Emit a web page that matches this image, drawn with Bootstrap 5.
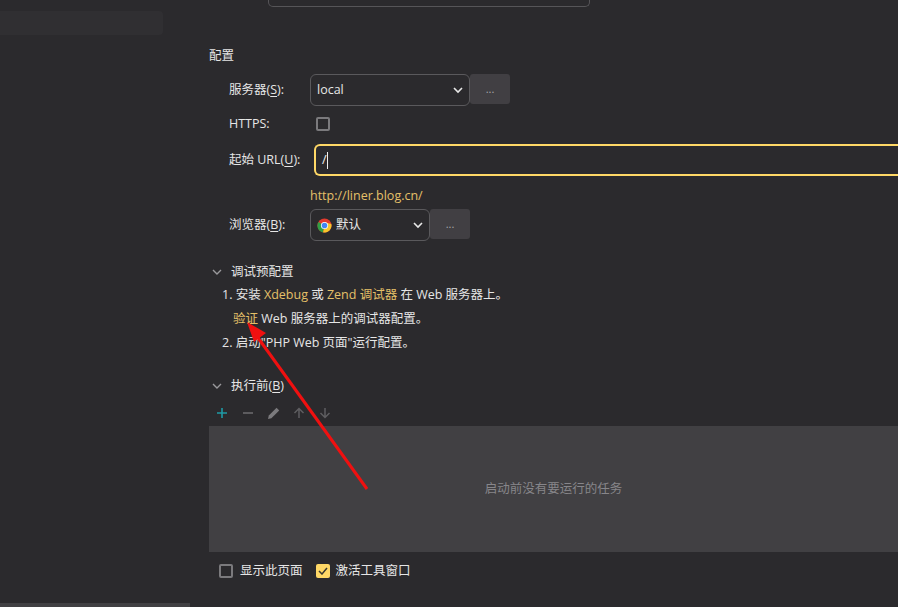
<!DOCTYPE html>
<html lang="zh-CN">
<head>
<meta charset="utf-8">
<title>配置</title>
<link href="https://cdn.jsdelivr.net/npm/bootstrap@5.3.0/dist/css/bootstrap.min.css" rel="stylesheet">
<style>
html,body{height:100%;margin:0;overflow:hidden;background:#2b2a2d}
body{font-family:"Open Sans","Noto Sans CJK SC",sans-serif;font-size:12.5px;line-height:18px;color:#e6e6e6}
.stage{position:relative;width:898px;height:607px;overflow:hidden}
.side{width:190px;flex:none;position:relative}
.side-sel{height:24px;margin-top:11px;background:#302f32;border-radius:0 4px 4px 0;margin-right:27px}
.side-scroll{height:4px;background:#414043;position:absolute;left:0;right:0;bottom:0}
.pane{width:708px;flex:none;padding-left:19px}
.top-input{width:322px;height:7px;margin-left:59px;border:1px solid #565558;border-top:0;border-radius:0 0 5px 5px}
.cfg-title{margin-top:40px;height:18px}
.frow{display:flex;align-items:center}
.flabel{width:81px;padding-left:20px;box-sizing:content-box;flex:none}
.sel{height:32px;background:#2b2a2d;border:1px solid #5a595c;border-radius:6px;display:flex;align-items:center;justify-content:space-between;padding:0 6px}
.sel-a{width:160px}.sel-b{width:120px}
.dots{width:40px;height:30px;background:#413f43;border-radius:3px;margin-left:0;color:#a8a8a8;font-size:11px;display:flex;align-items:center;justify-content:center;align-self:flex-start}
.chk{width:14px;height:14px;border:2px solid #7b7a7d;border-radius:2px;display:block;flex:none}
.url{flex:1;height:32px;border:2px solid #ffd866;border-right:0;border-radius:6px 0 0 6px;display:flex;align-items:center;padding-left:6px;color:#f0f0f0}
.caret{display:inline-block;width:1px;height:17px;background:#f0f0f0;margin-left:0}
.link-y{color:#e5c069}
.sec-h{display:flex;align-items:center;height:18px}
.sec-h span{margin-left:9px}
.step{height:24px;line-height:24px;white-space:nowrap}
.panel{height:126px;margin-right:0;background:#414043;display:flex;align-items:center;justify-content:center;color:#87868a}
.tools{height:18px;gap:8px}
.arrow{position:absolute;left:0;top:0;pointer-events:none}
u{text-underline-offset:2px}
</style>
</head>
<body>
<div class="stage d-flex">
  <div class="side">
    <div class="side-sel"></div>
    <div class="side-scroll"></div>
  </div>
  <div class="pane">
    <div class="top-input"></div>
    <div class="cfg-title">配置</div>
    <div class="frow" style="margin-top:9px">
      <div class="flabel">服务器(<u>S</u>):</div>
      <div class="sel sel-a"><span>local</span><svg width="10" height="7" viewBox="0 0 10 7"><path d="M1 1l4 4 4-4" fill="none" stroke="#e8e8e8" stroke-width="1.6"/></svg></div>
      <div class="dots">...</div>
    </div>
    <div class="frow" style="margin-top:8px;height:20px">
      <div class="flabel">HTTPS:</div>
      <span class="chk" style="margin-left:6px"></span>
    </div>
    <div class="frow" style="margin-top:10px;height:32px">
      <div class="flabel" style="width:85px">起始 URL(<u>U</u>):</div>
      <div class="url">/<span class="caret"></span></div>
    </div>
    <div class="link-y" style="margin:11px 0 0 101px;height:22px">http://liner.blog.cn/</div>
    <div class="frow">
      <div class="flabel">浏览器(<u>B</u>):</div>
      <div class="sel sel-b">
        <span class="d-flex align-items-center gap-1">
          <svg width="15" height="15" viewBox="0 0 16 16"><circle cx="8" cy="8" r="7.5" fill="#e33b2e"/><path d="M8 8L1.5 4.2A7.5 7.5 0 0 0 6.5 15.4z" fill="#2f9e44"/><path d="M8 8l-1.5 7.4A7.5 7.5 0 0 0 15.3 6.5L8 4.5z" fill="#f7c52b"/><circle cx="8" cy="8" r="3.8" fill="#fff"/><circle cx="8" cy="8" r="3" fill="#4285f4"/></svg>
          <span>默认</span>
        </span>
        <svg width="10" height="7" viewBox="0 0 10 7"><path d="M1 1l4 4 4-4" fill="none" stroke="#e8e8e8" stroke-width="1.6"/></svg>
      </div>
      <div class="dots">...</div>
    </div>
    <div class="sec-h" style="margin-top:22px">
      <svg width="10" height="7" viewBox="0 0 10 7" style="margin-left:3px"><path d="M1 1l4 4 4-4" fill="none" stroke="#9a999c" stroke-width="1.4"/></svg>
      <span>调试预配置</span>
    </div>
    <div style="padding-left:13px;margin-top:2px">
      <div class="step">1. 安装 <span class="link-y">Xdebug</span> 或 <span class="link-y">Zend 调试器</span> 在 Web 服务器上。</div>
      <div class="step" style="padding-left:11px"><span class="link-y">验证</span> Web 服务器上的调试器配置。</div>
      <div class="step">2. 启动"PHP Web 页面"运行配置。</div>
    </div>
    <div class="sec-h" style="margin-top:22px">
      <svg width="10" height="7" viewBox="0 0 10 7" style="margin-left:3px"><path d="M1 1l4 4 4-4" fill="none" stroke="#9a999c" stroke-width="1.4"/></svg>
      <span>执行前(<u>B</u>)</span>
    </div>
    <div class="d-flex align-items-center tools" style="margin-top:9px;padding-left:8px">
      <svg width="10" height="10" viewBox="0 0 10 10"><path d="M5 0v10M0 5h10" stroke="#1f9aa5" stroke-width="1.6"/></svg>
      <svg width="10" height="10" viewBox="0 0 10 10" style="margin-left:8px"><path d="M0 5h10" stroke="#69686b" stroke-width="1.6"/></svg>
      <svg width="14" height="14" viewBox="0 0 14 14" style="margin-left:6px"><path d="M1 13l.8-3.4L9.6 1.8l2.6 2.6-7.8 7.8z" fill="#7b7a7d"/></svg>
      <svg width="12" height="12" viewBox="0 0 12 12" style="margin-left:4px"><path d="M6 11V1.5M1.5 6L6 1.5 10.500 6" fill="none" stroke="#5f5e61" stroke-width="1.5"/></svg>
      <svg width="12" height="12" viewBox="0 0 12 12" style="margin-left:6px"><path d="M6 1v9.500M1.500 6L6 10.500 10.500 6" fill="none" stroke="#5f5e61" stroke-width="1.500"/></svg>
    </div>
    <div class="panel" style="margin-top:4px">启动前没有要运行的任务</div>
    <div class="d-flex align-items-center" style="margin-top:10px;padding-left:10px;height:18px">
      <span class="chk me-2" style="margin-right:7px!important"></span>
      <span>显示此页面</span>
      <span class="d-inline-flex align-items-center justify-content-center" style="width:14px;height:14px;background:#ffd866;border-radius:2px;margin:0 6px 0 13px"><svg width="10" height="8" viewBox="0 0 10 8"><path d="M1 4l3 3 5-6" fill="none" stroke="#3a3930" stroke-width="1.5"/></svg></span>
      <span>激活工具窗口</span>
    </div>
  </div>
  <svg class="arrow" width="898" height="607" viewBox="0 0 898 607"><path d="M367 489L256 335" stroke="#f01010" stroke-width="3" fill="none"/><path d="M247 322L266 333 254 342z" fill="#f01010"/></svg>
</div>
<script src="https://cdn.jsdelivr.net/npm/bootstrap@5.3.0/dist/js/bootstrap.bundle.min.js"></script>
</body>
</html>
